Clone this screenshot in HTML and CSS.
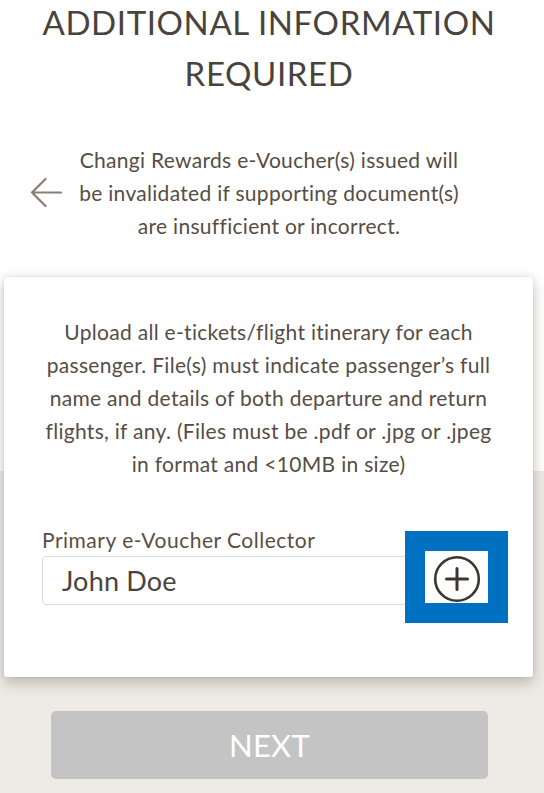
FILE: index.html
```html
<!DOCTYPE html>
<html lang="en">
<head>
<meta charset="utf-8">
<title>Additional Information Required</title>
<link rel="stylesheet" href="styles.css">
</head>
<body>
<div class="page">
  <h1 class="title">ADDITIONAL INFORMATION REQUIRED</h1>

  <div class="notice">
    <button class="back" aria-label="Back">
      <svg width="32" height="31" viewBox="0 0 32 31" fill="none" stroke="#8a7e73" stroke-width="2.2" stroke-linecap="round" stroke-linejoin="round">
        <path d="M31 15.5H2M15.5 2L2 15.5L15.5 29"/>
      </svg>
    </button>
    <p class="notice-text">Changi Rewards e-Voucher(s) issued will be invalidated if supporting document(s) are insufficient or incorrect.</p>
  </div>

  <section class="card">
    <p class="card-text">Upload all e-tickets/flight itinerary for each passenger. File(s) must indicate passenger’s full name and details of both departure and return flights, if any. (Files must be .pdf or .jpg or .jpeg in format and &lt;10MB in size)</p>

    <div class="field">
      <label class="field-label" for="collector">Primary e-Voucher Collector</label>
      <div class="field-row">
        <input class="field-input" id="collector" type="text" value="John Doe">
      </div>
      <div class="highlight">
        <button class="add" aria-label="Add">
          <svg width="48" height="48" viewBox="0 0 48 48" fill="none" stroke="#3d3630" stroke-linecap="round">
            <circle cx="24" cy="24" r="21.8" stroke-width="2.6"/>
            <path d="M24 13.5V34.5M13.5 24H34.5" stroke-width="3"/>
          </svg>
        </button>
      </div>
    </div>
  </section>

  <button class="next" type="button">NEXT</button>
</div>
</body>
</html>
```

FILE: styles.css
```css
html, body {
  margin: 0;
  padding: 0;
}

body {
  font-family: Lato, "Open Sans", Arial, sans-serif;
  color: #4f4741;
  background: linear-gradient(#ffffff 0, #ffffff 471px, #eeebe6 471px, #eeebe6 100%);
  min-height: 793px;
}

.page {
  width: 538px;
  display: flex;
  flex-direction: column;
}

.title {
  margin: -3px 0 0;
  padding: 0 20px;
  font-size: 33px;
  line-height: 51px;
  font-weight: 400;
  text-align: center;
  color: #4a433d;
  letter-spacing: 0.6px;
}

.notice {
  margin-top: 44px;
  display: grid;
  grid-template-columns: 1fr 394px 1fr;
  align-items: center;
}

.back {
  justify-self: start;
  margin-left: 30px;
  padding: 0;
  border: 0;
  background: none;
  display: flex;
}

.notice-text {
  margin: 0;
  font-size: 21px;
  line-height: 33px;
  letter-spacing: 0.3px;
  text-align: center;
  color: #564d46;
}

.card {
  margin: 35px 5px 0 4px;
  background: #fff;
  border-radius: 2px;
  box-shadow: 0 0 1px rgba(0, 0, 0, 0.25), 0 6px 14px rgba(60, 50, 40, 0.28), 0 -2px 10px rgba(0, 0, 0, 0.05);
  padding: 38px 0 72px;
  display: flex;
  flex-direction: column;
}

.card-text {
  margin: 0 auto;
  width: 450px;
  font-size: 21px;
  line-height: 33px;
  letter-spacing: 0.3px;
  text-align: center;
  color: #564d46;
}

.field {
  position: relative;
  margin: 48px 0 0 38px;
  width: 380px;
}

.field-label {
  display: block;
  font-size: 21px;
  line-height: 24px;
  letter-spacing: 0.5px;
  color: #5a4e44;
}

.field-row {
  margin-top: 4px;
  display: flex;
}

.field-input {
  flex: 1;
  height: 49px;
  box-sizing: border-box;
  border: 1.5px solid #dddbd9;
  border-radius: 4px;
  padding: 0 0 0 19px;
  font-family: Lato, "Open Sans", Arial, sans-serif;
  font-size: 27px;
  letter-spacing: 0.2px;
  color: #4a433d;
  background: #fff;
  outline: none;
}

.highlight {
  position: absolute;
  left: 363px;
  top: 3px;
  width: 63px;
  height: 52px;
  border: 20px solid #0070c0;
  background: #fff;
  display: flex;
  align-items: center;
  justify-content: center;
}

.add {
  padding: 0;
  border: 0;
  background: none;
  display: flex;
  margin: 4px 0 0 1px;
}

.next {
  margin: 34px 50px 0 51px;
  height: 68px;
  border: 0;
  border-radius: 5px;
  background: #c4c4c4;
  color: #ffffff;
  font-family: Lato, "Open Sans", Arial, sans-serif;
  font-size: 31px;
  letter-spacing: 0.2px;
}
```
